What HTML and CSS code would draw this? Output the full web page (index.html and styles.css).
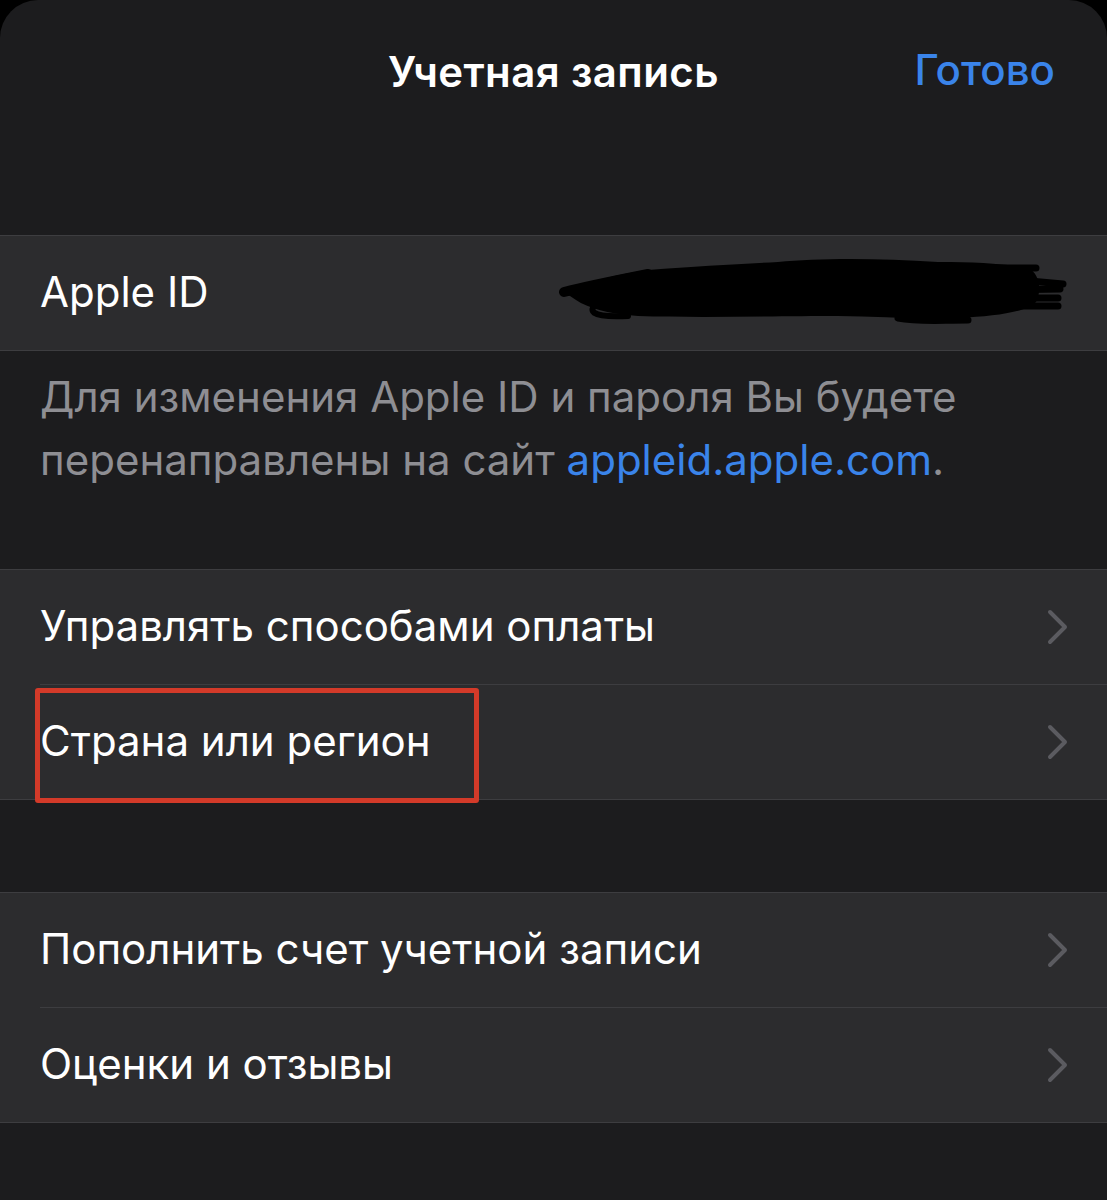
FILE: index.html
```html
<!DOCTYPE html>
<html lang="ru">
<head>
    <meta charset="UTF-8">
    <meta name="viewport" content="width=device-width, initial-scale=1.0">
    <title>Учетная запись</title>
    <link rel="stylesheet" href="styles.css">
</head>
<body>
    <div class="sheet">
        <div class="nav">
            <div class="nav-title">Учетная запись</div>
            <div class="nav-done">Готово</div>
        </div>

        <div class="group group-first">
            <div class="row">
                <div class="row-inner">
                    <span class="row-label">Apple ID</span>
                </div>
                <svg class="scribble" width="520" height="70" viewBox="0 0 520 70">
                    <path d="M6 36 C30 26 60 18 90 14 C140 10 180 8 220 6 C260 2 320 2 380 6 C420 6 450 8 470 12 C482 18 484 34 478 46 C468 56 440 60 400 62 C360 64 320 60 280 60 C220 60 140 62 80 60 C50 58 30 52 18 44 Z" fill="#000"/>
                    <path d="M6 36 C30 30 60 24 90 18" stroke="#000" stroke-width="10" stroke-linecap="round" fill="none"/>
                    <path d="M40 46 C30 54 30 62 70 60" stroke="#000" stroke-width="6" stroke-linecap="round" fill="none"/>
                    <path d="M420 12 L478 12 M440 22 L505 28 M440 34 L502 33 M440 42 L500 42 M440 50 L500 50" stroke="#000" stroke-width="7" stroke-linecap="round" fill="none"/>
                    <path d="M340 62 C360 66 380 64 410 64" stroke="#000" stroke-width="7" stroke-linecap="round" fill="none"/>
                </svg>
            </div>
        </div>

        <div class="footer-note">
            Для изменения Apple ID и пароля Вы будете перенаправлены на сайт <span class="link">appleid.apple.com</span>.
        </div>

        <div class="group group-second">
            <div class="row">
                <div class="row-inner">
                    <span class="row-label">Управлять способами оплаты</span>
                    <svg class="chevron" width="22" height="36" viewBox="0 0 22 36"><path d="M3 3 L18 18 L3 33" stroke="#5b5b60" stroke-width="4" fill="none" stroke-linecap="round" stroke-linejoin="round"/></svg>
                </div>
            </div>
            <div class="row">
                <div class="row-inner">
                    <span class="row-label">Страна или регион</span>
                    <svg class="chevron" width="22" height="36" viewBox="0 0 22 36"><path d="M3 3 L18 18 L3 33" stroke="#5b5b60" stroke-width="4" fill="none" stroke-linecap="round" stroke-linejoin="round"/></svg>
                </div>
                <div class="highlight"></div>
            </div>
        </div>

        <div class="group group-third">
            <div class="row">
                <div class="row-inner">
                    <span class="row-label">Пополнить счет учетной записи</span>
                    <svg class="chevron" width="22" height="36" viewBox="0 0 22 36"><path d="M3 3 L18 18 L3 33" stroke="#5b5b60" stroke-width="4" fill="none" stroke-linecap="round" stroke-linejoin="round"/></svg>
                </div>
            </div>
            <div class="row">
                <div class="row-inner">
                    <span class="row-label">Оценки и отзывы</span>
                    <svg class="chevron" width="22" height="36" viewBox="0 0 22 36"><path d="M3 3 L18 18 L3 33" stroke="#5b5b60" stroke-width="4" fill="none" stroke-linecap="round" stroke-linejoin="round"/></svg>
                </div>
            </div>
        </div>
    </div>
</body>
</html>
```

FILE: styles.css
```css
/* Экран учетной записи, тёмная тема */
body {
    margin: 0;
    background: #000;
    font-family: Inter, "Noto Sans", "Liberation Sans", sans-serif;
    color: #fff;
}

.sheet {
    background: #1c1c1e;
    border-radius: 38px 38px 0 0;
    min-height: 1200px;
    overflow: hidden;
}

.nav {
    position: relative;
    height: 145px;
    display: flex;
    align-items: center;
    justify-content: center;
}

.nav-title {
    font-size: 42px;
    font-weight: 600;
    letter-spacing: 0.4px;
    margin-top: -2px;
}

.nav-done {
    position: absolute;
    right: 52px;
    top: 44px;
    font-size: 42px;
    font-weight: 500;
    color: #3a84ea;
}

.group {
    background: #2c2c2e;
    border-top: 1px solid #3d3d40;
    border-bottom: 1px solid #3d3d40;
}

.group-first {
    margin-top: 90px;
}

.group-second {
    margin-top: 78px;
}

.group-third {
    margin-top: 92px;
}

.row {
    position: relative;
    padding-left: 40px;
}

.row-inner {
    height: 114px;
    display: flex;
    align-items: center;
    justify-content: space-between;
    padding-right: 38px;
}

.row + .row .row-inner {
    border-top: 1px solid #3d3d40;
}

.row-label {
    font-size: 42px;
    margin-top: -3px;
}

.chevron {
    display: block;
}

.scribble {
    position: absolute;
    left: 558px;
    top: 20px;
}

.footer-note {
    padding: 14px 40px 0 40px;
    font-size: 42px;
    line-height: 63px;
    color: #8e8e93;
    width: 960px;
}

.link {
    color: #3a84ea;
}

.highlight {
    position: absolute;
    left: 35px;
    top: 4px;
    width: 434px;
    height: 105px;
    border: 5px solid #d33a29;
    border-radius: 3px;
}
```
